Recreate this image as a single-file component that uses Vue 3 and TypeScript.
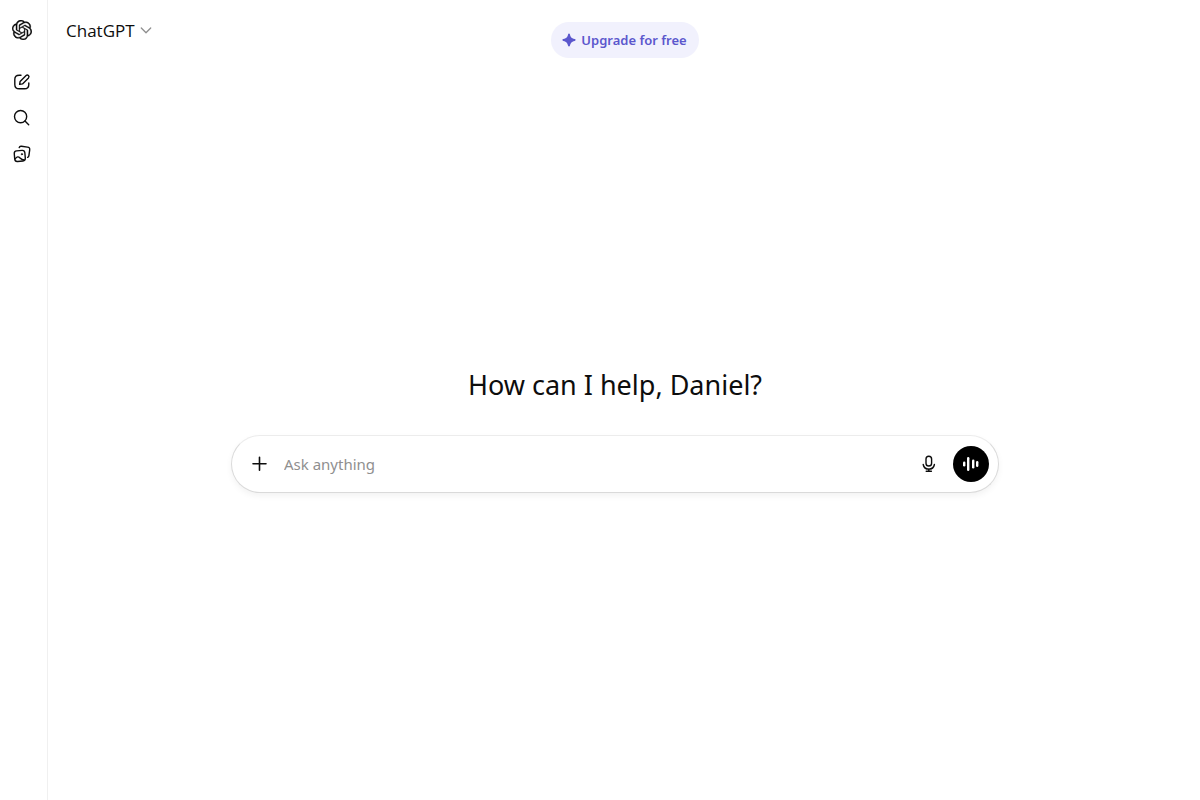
<script setup lang="ts">
import { ref } from 'vue'

const prompt = ref('')
const userName = 'Daniel'
const bars = [
  { x: 2, h: 5 },
  { x: 6, h: 14 },
  { x: 11, h: 9 },
  { x: 15, h: 6 },
]
</script>

<template>
  <div class="app">
    <nav class="rail" aria-label="Sidebar">
      <a class="logo" href="#" aria-label="Home">
        <svg width="20" height="20" viewBox="0 0 24 24" fill="currentColor" stroke="currentColor" stroke-width="0.3">
          <path d="M22.2819 9.8211a5.9847 5.9847 0 0 0-.5157-4.9108 6.0462 6.0462 0 0 0-6.5098-2.9A6.0651 6.0651 0 0 0 4.9807 4.1818a5.9847 5.9847 0 0 0-3.9977 2.9 6.0462 6.0462 0 0 0 .7427 7.0966 5.98 5.98 0 0 0 .511 4.9107 6.051 6.051 0 0 0 6.5146 2.9001A5.9847 5.9847 0 0 0 13.2599 24a6.0557 6.0557 0 0 0 5.7718-4.2058 5.9894 5.9894 0 0 0 3.9977-2.9001 6.0557 6.0557 0 0 0-.7475-7.0729zm-9.022 12.6081a4.4755 4.4755 0 0 1-2.8764-1.0408l.1419-.0804 4.7783-2.7582a.7948.7948 0 0 0 .3927-.6813v-6.7369l2.02 1.1686a.071.071 0 0 1 .038.052v5.5826a4.504 4.504 0 0 1-4.4945 4.4944zm-9.6607-4.1254a4.4708 4.4708 0 0 1-.5346-3.0137l.142.0852 4.783 2.7582a.7712.7712 0 0 0 .7806 0l5.8428-3.3685v2.3324a.0804.0804 0 0 1-.0332.0615L9.74 19.9502a4.4992 4.4992 0 0 1-6.1408-1.6464zM2.3408 7.8956a4.485 4.485 0 0 1 2.3655-1.9728V11.6a.7664.7664 0 0 0 .3879.6765l5.8144 3.3543-2.0201 1.1685a.0757.0757 0 0 1-.071 0l-4.8303-2.7865A4.504 4.504 0 0 1 2.3408 7.872zm16.5963 3.8558L13.1038 8.364 15.1192 7.2a.0757.0757 0 0 1 .071 0l4.8303 2.7913a4.4944 4.4944 0 0 1-.6765 8.1042v-5.6772a.79.79 0 0 0-.407-.667zm2.0107-3.0231l-.142-.0852-4.7735-2.7818a.7759.7759 0 0 0-.7854 0L9.409 9.2297V6.8974a.0662.0662 0 0 1 .0284-.0615l4.8303-2.7866a4.4992 4.4992 0 0 1 6.6802 4.66zM8.3065 12.863l-2.02-1.1638a.0804.0804 0 0 1-.038-.0567V6.0742a4.4992 4.4992 0 0 1 7.3757-3.4537l-.142.0805L8.704 5.459a.7948.7948 0 0 0-.3927.6813zm1.0976-2.3654l2.602-1.4998 2.6069 1.4998v2.9994l-2.5974 1.4997-2.6067-1.4997Z" />
        </svg>
      </a>
      <button class="rail-btn" type="button" aria-label="New chat">
        <svg class="line" width="20" height="20" viewBox="0 0 20 20">
          <path d="M9 3.2H7.2C4.2 3.2 2.8 4.6 2.8 7.6v4.8c0 3 1.4 4.4 4.4 4.4h5.2c3 0 4.4-1.4 4.4-4.4V11" />
          <path d="M7.6 12.4l.5-2.9 6-6a1.7 1.7 0 0 1 2.4 2.4l-6 6z" />
        </svg>
      </button>
      <button class="rail-btn" type="button" aria-label="Search chats">
        <svg class="line" width="20" height="20" viewBox="0 0 20 20">
          <circle cx="8.6" cy="8.6" r="6.1" />
          <path d="M13 13l3.7 3.7" />
        </svg>
      </button>
      <button class="rail-btn" type="button" aria-label="Library">
        <svg class="line" width="20" height="20" viewBox="0 0 20 20">
          <rect x="2.5" y="6.6" width="10.6" height="10.6" rx="2.6" transform="rotate(-5 8 12)" />
          <path d="M7.2 3.6c.3-1.1 1-1.5 2.3-1.3l6 .8c1.7.2 2.4 1.1 2.2 2.7l-.8 5.8c-.1 1-.6 1.5-1.3 1.7" />
          <path d="M3.2 14.8c1.6-2.3 3.2-2.5 4.8-.9 1.2 1.2 2.3 2 4.3 2.1" />
          <circle cx="9.9" cy="10.2" r="0.7" fill="currentColor" stroke-width="0.6" />
        </svg>
      </button>
    </nav>

    <div class="page">
      <header class="top">
        <button class="model" type="button">
          <span>ChatGPT</span>
          <svg width="12" height="12" viewBox="0 0 12 12" fill="none" stroke="#8f8f8f" stroke-width="1.3" stroke-linecap="round" stroke-linejoin="round">
            <path d="M1.3 4L6 8.8 10.700 4" />
          </svg>
        </button>
        <button class="upgrade" type="button">
          <svg width="14" height="14" viewBox="0 0 14 14" fill="currentColor">
            <path d="M7 .4c.5 0 .7.3.9.8.6 2.6 1.3 4 4.8 4.9.6.2.9.4.9.9s-.3.7-.9.9c-3.5.9-4.2 2.3-4.8 4.9-.2.5-.4.8-.9.8s-.7-.3-.9-.8C5.5 10.2 4.8 8.8 1.3 7.9.7 7.7.4 7.5.4 7s.3-.7.9-.9c3.5-.9 4.2-2.3 4.8-4.9.2-.5.4-.8.9-.8z" />
          </svg>
          <span>Upgrade for free</span>
        </button>
      </header>

      <main class="content">
        <h1>How can I help, {{ userName }}?</h1>
        <form class="composer" @submit.prevent>
          <button class="icon-btn" type="button" aria-label="Add files">
            <svg class="line" width="20" height="20" viewBox="0 0 20 20">
              <path d="M9.5 3.2v13M3 9.700h13" stroke-width="1.6" />
            </svg>
          </button>
          <input v-model="prompt" type="text" placeholder="Ask anything" aria-label="Ask anything" />
          <button class="icon-btn" type="button" aria-label="Dictate">
            <svg class="line" width="20" height="20" viewBox="0 0 20 20">
              <rect x="7" y="2.2" width="5.6" height="9.8" rx="2.8" />
              <path d="M4.2 10.5a5.7 5.7 0 0 0 11.2 0M9.800 15v2.200M7.200 17.200h5.200" />
            </svg>
          </button>
          <button class="voice" type="button" aria-label="Use voice mode">
            <svg width="20" height="20" viewBox="0 0 20 20" fill="currentColor">
              <rect v-for="bar in bars" :key="bar.x" :x="bar.x" :y="10 - bar.h / 2" width="2.4" :height="bar.h" rx="1.2" />
            </svg>
          </button>
        </form>
      </main>
    </div>
  </div>
</template>

<style>
body {
  margin: 0;
  background: #fff;
}
</style>

<style scoped>
.app {
  display: flex;
  min-height: 100vh;
  color: #0d0d0d;
  background: #fff;
  font-family: "Noto Sans", "Open Sans", sans-serif;
}

button {
  display: flex;
  align-items: center;
  justify-content: center;
  padding: 0;
  border: 0;
  background: none;
  color: inherit;
  font: inherit;
  cursor: pointer;
}

svg {
  display: block;
  flex: none;
}

.line {
  fill: none;
  stroke: currentColor;
  stroke-width: 1.4;
  stroke-linecap: round;
  stroke-linejoin: round;
}

.rail {
  box-sizing: border-box;
  flex: none;
  display: flex;
  flex-direction: column;
  width: 48px;
  padding: 12px 7px 12px 4px;
  border-right: 1px solid #f0f0f0;
}

.logo {
  display: flex;
  align-items: center;
  justify-content: center;
  height: 36px;
  margin-bottom: 16px;
  color: inherit;
}

.rail-btn {
  height: 36px;
}

.page {
  flex: 1;
  min-width: 0;
  display: flex;
  flex-direction: column;
}

.top {
  display: grid;
  grid-template-columns: 1fr auto 1fr;
  align-items: start;
  box-sizing: border-box;
  min-height: 60px;
  padding: 12px 16px 0 18px;
}

.model {
  justify-self: start;
  gap: 5px;
  height: 36px;
  font-family: "Open Sans", "Noto Sans", sans-serif;
  font-size: 17px;
}

.upgrade {
  gap: 5px;
  height: 36px;
  margin-top: 10px;
  padding: 0 12px 0 11px;
  border-radius: 18px;
  background: #f1f1fd;
  color: #5b57cd;
  font-size: 13px;
  font-weight: 600;
}

.content {
  flex: 1;
  display: flex;
  flex-direction: column;
  align-items: center;
  justify-content: center;
  padding: 0 34px 0 16px;
}

h1 {
  margin: 0 0 32px;
  font-size: 27px;
  line-height: 36px;
  font-weight: 400;
  text-align: center;
}

.composer {
  box-sizing: border-box;
  display: flex;
  align-items: center;
  width: 100%;
  max-width: 768px;
  padding: 10px 9px 10px 10px;
  border: 1px solid #dadada;
  border-top-color: #ececec;
  border-radius: 29px;
  background: #fff;
  box-shadow: 0 3px 6px rgba(0, 0, 0, 0.05);
}

.icon-btn,
.voice {
  flex: none;
  width: 36px;
  height: 36px;
  border-radius: 50%;
}

.composer input {
  flex: 1;
  min-width: 0;
  height: 24px;
  padding: 0 6px;
  border: 0;
  outline: 0;
  background: none;
  color: inherit;
  font: inherit;
  font-size: 15px;
}

.composer input::placeholder {
  color: #8f8f8f;
  opacity: 1;
}

.voice {
  margin-left: 6px;
  background: #000;
  color: #fff;
}
</style>
